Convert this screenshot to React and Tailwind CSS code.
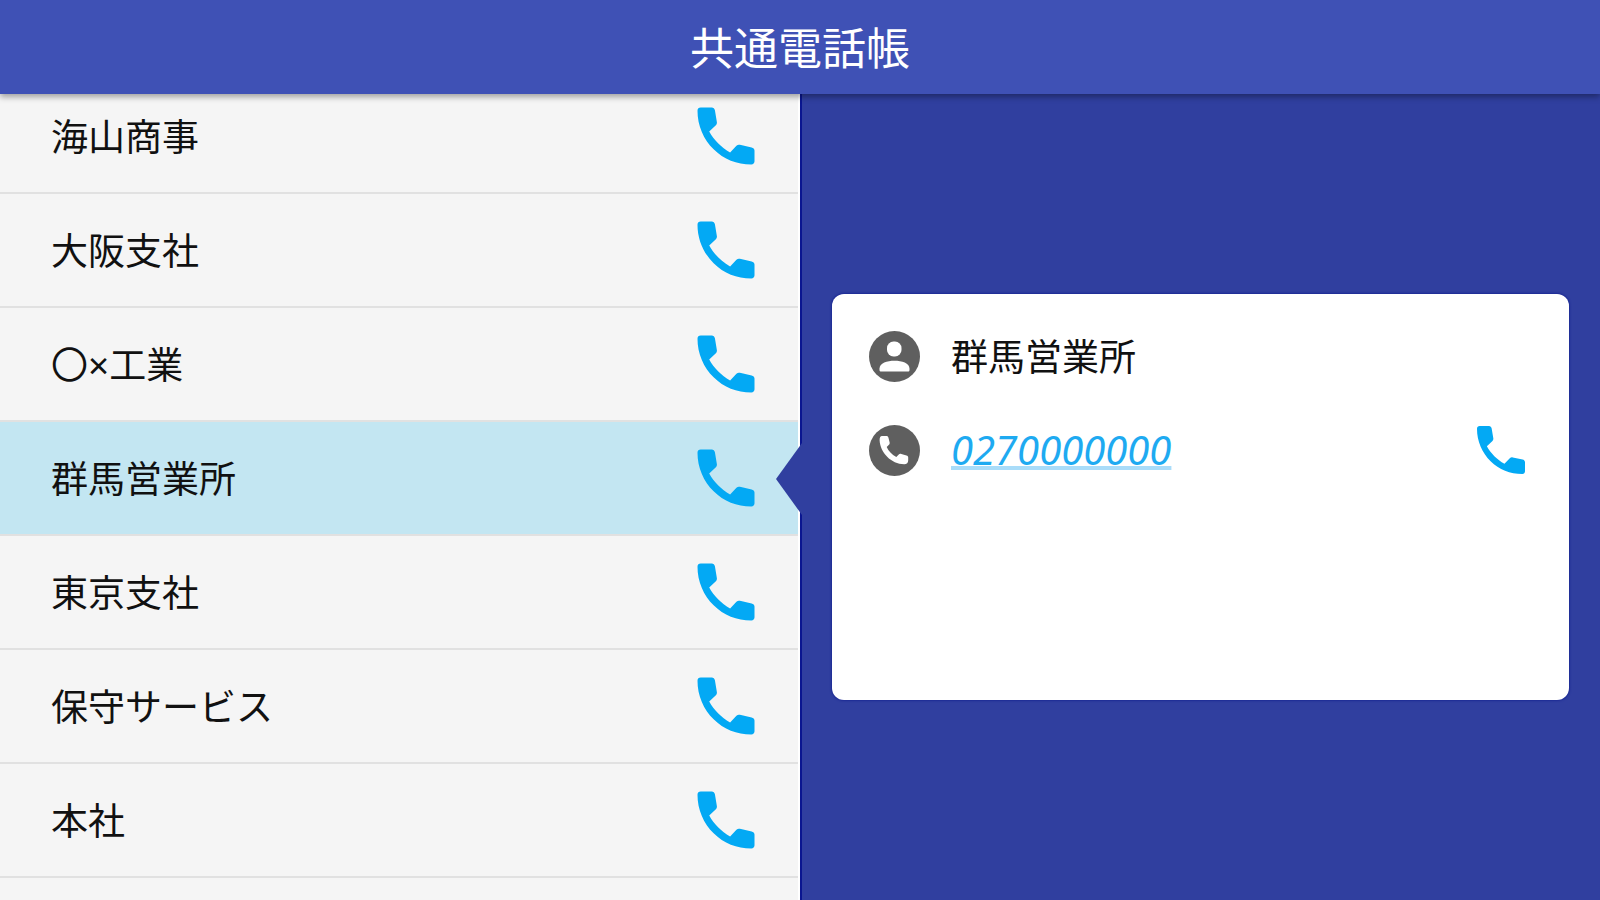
import React, { useState } from "react";

const contacts = [
  { id: 1, name: "海山商事", tel: "0660000000" },
  { id: 2, name: "大阪支社", tel: "0670000000" },
  { id: 3, name: "〇×工業", tel: "0520000000" },
  { id: 4, name: "群馬営業所", tel: "0270000000" },
  { id: 5, name: "東京支社", tel: "0330000000" },
  { id: 6, name: "保守サービス", tel: "0350000000" },
  { id: 7, name: "本社", tel: "0340000000" },
];

const CallIcon = ({ className }) => (
  <svg viewBox="0 0 24 24" fill="currentColor" className={className}>
    <path d="M6.7 10.6c1.5 2.7 3.8 5 6.6 6.6l2-2.1c.3-.3.7-.4 1.1-.3l3.7.8c.5.1.9.5.9 1V20c0 .6-.4 1-1 1-4.6 0-8.7-1.600-11.9-4.800C4.9 13 3 8.7 3 4c0-.6.4-1 1-1h3.5c.5 0 .9.4 1 .9l.6 3.6c.1.4 0 .8-.3 1.1z" />
  </svg>
);

const PersonBadge = () => (
  <svg viewBox="0 0 51 51" className="w-[51px] h-[51px] shrink-0">
    <circle cx="25.5" cy="25.5" r="25.5" fill="#5f5f5f" />
    <rect x="18" y="10.5" width="14.5" height="15" rx="6.5" fill="#fff" />
    <path
      d="M10.5 37.5c0-5.4 7.6-7.8 15-7.8s15 2.4 15 7.8v1.4c0 1-.6 1.6-1.6 1.6H12.1c-1 0-1.6-.6-1.6-1.6z"
      fill="#fff"
    />
  </svg>
);

const PhoneBadge = () => (
  <svg viewBox="0 0 51 51" className="w-[51px] h-[51px] shrink-0">
    <circle cx="25.5" cy="25.5" r="25.5" fill="#5f5f5f" />
    <path
      d="M13 11h4.5c1 0 1.6.6 1.9 1.6l1.2 4.6c.3 1.2 0 2-.9 2.8l-2 1.9c1.8 4 5 7.6 9.6 10l2.2-2.2c.8-.8 1.7-1 2.8-.7l5.2 1.5c1.1.3 1.7 1 1.7 2.1v2.6c0 2.6-1.4 4-4 4-13-.2-24-11.6-24.6-24C10.5 12.6 11.5 11 13 11z"
      fill="#fff"
    />
  </svg>
);

const ContactRow = ({ contact, selected, onSelect }) => (
  <li
    className={`${
      selected ? "bg-[#c3e6f2]" : "bg-[#f5f5f5]"
    } flex shrink-0 h-[114px] items-center border-b-2 border-[#e1e1e1] pr-[34px]`}
  >
    <button
      className="flex-1 h-full pt-0.5 pl-[51px] text-left text-[37px] text-[#111111]"
      onClick={onSelect}
    >
      {contact.name}
    </button>
    <button aria-label={`${contact.name}に発信`} className="text-[#03a9f4]">
      <CallIcon className="w-[76px] h-[76px]" />
    </button>
  </li>
);

const App = () => {
  const [selectedId, setSelectedId] = useState(4);
  const selected = contacts.find((c) => c.id === selectedId);
  const selectedIdx = contacts.indexOf(selected);

  return (
    <div className="flex flex-col h-screen overflow-hidden font-['Noto_Sans','Noto_Sans_CJK_JP',sans-serif]">
      <header className="relative z-10 flex h-[94px] shrink-0 items-center justify-center bg-[#3f51b5] pt-0.5 shadow-[0_3px_6px_rgba(0,0,0,0.35)]">
        <h1 className="text-[44px] leading-none text-white">共通電話帳</h1>
      </header>

      <main className="grid flex-1 grid-cols-2 min-h-0">
        <div className="min-h-0 overflow-hidden bg-[#f5f5f5] border-r-2 border-white">
          <ul className="flex flex-col -mt-[14px]">
            {contacts.map((contact) => (
              <ContactRow
                key={contact.id}
                contact={contact}
                selected={contact.id === selectedId}
                onSelect={() => setSelectedId(contact.id)}
              />
            ))}
          </ul>
        </div>

        <section className="relative flex items-center bg-[#303f9f] border-l-2 border-[#0a1690] pl-[30px] pr-[31px]">
          {/* 選択行を指す矢印 */}
          <svg
            viewBox="0 0 28 72"
            className="absolute -left-[26px] w-7 h-[72px]"
            style={{ top: selectedIdx * 114 + 7 }}
          >
            <path d="M28 0L26 0L0 36L26 72L28 72z" fill="#303f9f" />
          </svg>

          <div className="w-full h-[406px] rounded-xl bg-white pt-4 pl-[37px] pr-9 shadow-[0_0_2px_1px_#1c2a94]">
            <div className="flex h-[92px] items-center gap-[31px]">
              <PersonBadge />
              <h2 className="pt-0.5 text-[37px] text-[#111111]">
                {selected.name}
              </h2>
            </div>
            <div className="flex h-[96px] items-center gap-[31px]">
              <PhoneBadge />
              <a
                href={`tel:${selected.tel}`}
                className="text-[40px] italic text-[#1eaaf1] underline decoration-[#a9dcf9] decoration-4 underline-offset-1 [text-decoration-skip-ink:none]"
              >
                {selected.tel}
              </a>
              <button
                aria-label={`${selected.name}に発信`}
                className="ml-auto text-[#03a9f4]"
              >
                <CallIcon className="w-16 h-16" />
              </button>
            </div>
          </div>
        </section>
      </main>
    </div>
  );
};

export default App;
